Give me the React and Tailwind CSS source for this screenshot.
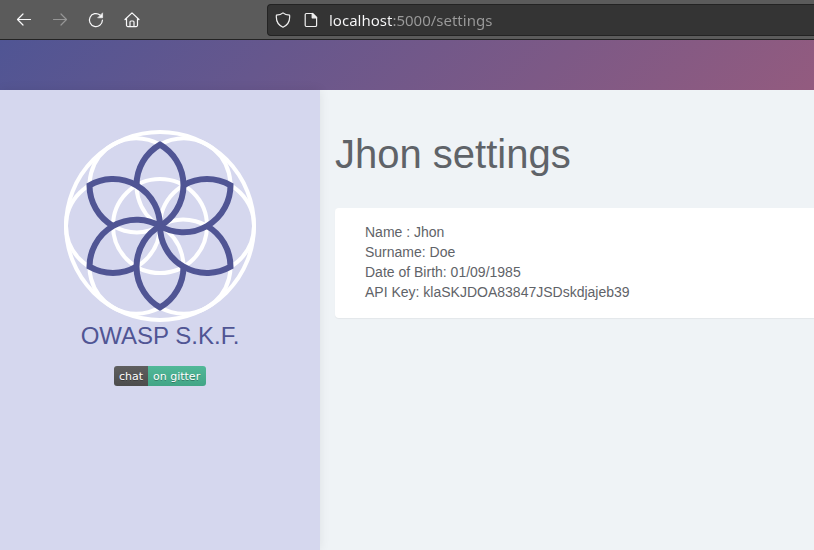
import React from "react";

const PETALS = [0, 60, 120, 180, 240, 300];

function FlowerLogo() {
  return (
    <svg viewBox="0 0 192 192" className="size-48" fill="none" role="img" aria-label="OWASP S.K.F. logo">
      <g stroke="#fff" strokeWidth="4">
        <circle cx="96" cy="96" r="94" />
        <circle cx="96" cy="96" r="47" />
        {PETALS.map((a) => (
          <circle key={a} cx="143" cy="96" r="47" transform={`rotate(${a} 96 96)`} />
        ))}
      </g>
      <g stroke="#505594" strokeWidth="6" strokeLinejoin="miter">
        {PETALS.map((a) => (
          <path
            key={a}
            d="M96 96A47 47 0 0 0 96 14.6A47 47 0 0 0 72.5 55.3"
            transform={`rotate(${a} 96 96)`}
          />
        ))}
      </g>
    </svg>
  );
}

function ToolButton({ label, disabled, children }) {
  return (
    <button
      type="button"
      aria-label={label}
      disabled={disabled}
      className="flex size-5 items-center justify-center text-[#f9f9fa] disabled:text-[#969696]"
    >
      <svg viewBox="0 0 16 16" className="size-4" fill="none" stroke="currentColor" strokeWidth="1.2" strokeLinecap="round" strokeLinejoin="round">
        {children}
      </svg>
    </button>
  );
}

function BrowserBar() {
  return (
    <div className="flex h-10 items-center border-b border-[#232323] bg-[#5b5b5b] pl-3.5">
      <div className="flex shrink-0 gap-4">
        <ToolButton label="Back">
          <path d="M14.5 7.5H1.7M7 2L1.5 7.5L7 13" />
        </ToolButton>
        <ToolButton label="Forward" disabled>
          <path d="M1.5 7.5h12.8M9 2L14.500 7.500L9 13" />
        </ToolButton>
        <ToolButton label="Reload">
          <path d="M14.4 8.2A6.5 6.500 0 1 1 12 3" />
          <path d="M14.600 1.200v4.600H10z" fill="currentColor" strokeWidth="0.6" />
        </ToolButton>
        <ToolButton label="Home">
          <path d="M1 7.500L8 .9L15 7.500M2.500 6.500v6.700a1.400 1.400 0 0 0 1.400 1.400h8.200a1.400 1.400 0 0 0 1.400-1.400V6.500M6 14.400V10a1 1 0 0 1 1-1h2a1 1 0 0 1 1 1v4.400" />
        </ToolButton>
      </div>
      <div className="ml-[125px] flex h-8 min-w-0 flex-1 items-center rounded-l border border-r-0 border-[#232323] bg-[#343434] pl-[7px] text-[#f0f0f0]">
        <svg viewBox="0 0 16 16" className="size-4 shrink-0" fill="none" stroke="currentColor" strokeWidth="1.2" strokeLinejoin="round">
          <path d="M8 .9C9.600 2.300 12 3 14.600 3.200c.5 5.200-1.300 9.600-6.600 12C2.700 12.800.9 8.400 1.400 3.200C4 3 6.400 2.300 8 .9z" />
        </svg>
        <svg viewBox="0 0 16 16" className="ml-3 size-4 shrink-0" fill="none" stroke="currentColor" strokeWidth="1.2" strokeLinejoin="round">
          <path d="M3.400 1.500h6.200l4 4v7.800a1.200 1.200 0 0 1-1.200 1.200H3.400a1.200 1.200 0 0 1-1.200-1.200V2.700a1.200 1.200 0 0 1 1.200-1.200z" />
          <path d="M9.200 1.500v4.300h4.400z" fill="currentColor" />
        </svg>
        <input
          type="text"
          aria-label="Address"
          defaultValue="localhost:5000/settings"
          className="ml-2.5 h-6 min-w-0 flex-1 bg-[linear-gradient(90deg,#f9f9fa_64px,#9b9b9b_64px)] bg-clip-text font-['Noto_Sans',sans-serif] text-[15px] text-transparent outline-none"
        />
      </div>
    </div>
  );
}

function Sidebar() {
  return (
    <aside className="flex w-80 shrink-0 flex-col items-center bg-[#d5d7ee] pt-10 shadow-[0_0_10px_rgba(0,0,0,0.08)]">
      <FlowerLogo />
      <h2 className="text-[24px] leading-[28px] text-[#505594]">OWASP S.K.F.</h2>
      <a
        href="#gitter"
        className="mt-4 flex h-5 overflow-hidden rounded-[3px] font-['DejaVu_Sans',sans-serif] text-[11px] leading-[22px] text-white [text-shadow:0_1px_0_rgba(1,1,1,0.3)]"
      >
        <span className="w-[34px] bg-linear-to-b from-[#5f5f5f] to-[#4c4c4c] text-center">chat</span>
        <span className="w-[58px] bg-linear-to-b from-[#51b898] to-[#42a586] pl-[5px]">on gitter</span>
      </a>
    </aside>
  );
}

const DETAILS = [
  "Name : Jhon",
  "Surname: Doe",
  "Date of Birth: 01/09/1985",
  "API Key: klaSKJDOA83847JSDskdjajeb39",
];

export default function App() {
  return (
    <div className="flex min-h-screen flex-col bg-[#eff3f6] font-['Liberation_Sans',Arial,sans-serif] text-[#5f6368]">
      <BrowserBar />
      <header className="h-[50px] bg-[linear-gradient(135deg,#505594,#935b7f)]" />
      <div className="flex flex-1">
        <Sidebar />
        <main className="min-w-0 flex-1 pt-10 pl-[15px]">
          <h1 className="text-[40px] leading-[48px]">Jhon settings</h1>
          <section className="mt-[30px] rounded-l bg-white px-[30px] pt-3.5 pb-4 shadow-[0_1px_1px_rgba(0,0,0,0.05)]">
            {DETAILS.map((line) => (
              <p key={line} className="text-[14px] leading-[20px]">{line}</p>
            ))}
          </section>
        </main>
      </div>
    </div>
  );
}
